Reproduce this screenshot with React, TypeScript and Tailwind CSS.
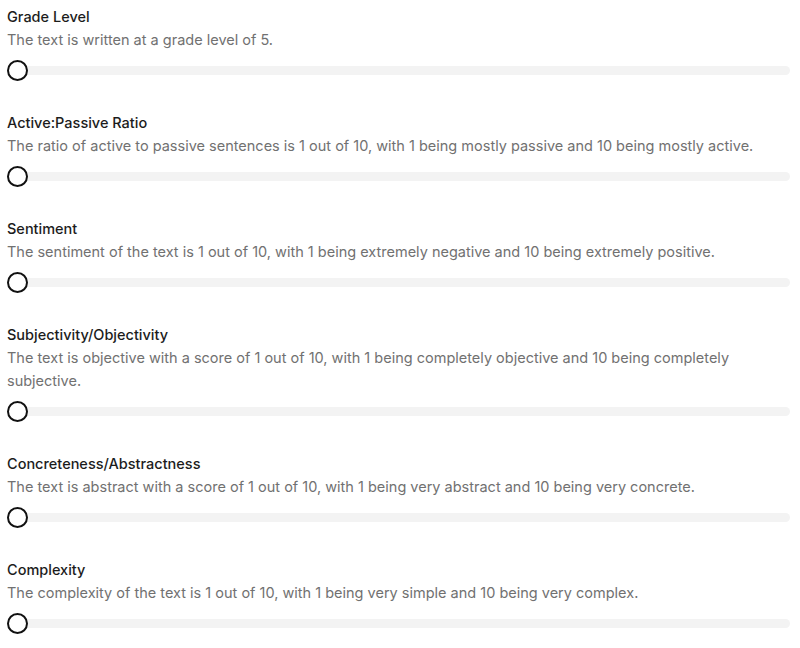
import React from "react";

const items = [
  { title: "Grade Level", desc: "The text is written at a grade level of 5." },
  { title: "Active:Passive Ratio", desc: "The ratio of active to passive sentences is 1 out of 10, with 1 being mostly passive and 10 being mostly active." },
  { title: "Sentiment", desc: "The sentiment of the text is 1 out of 10, with 1 being extremely negative and 10 being extremely positive." },
  { title: "Subjectivity/Objectivity", desc: "The text is objective with a score of 1 out of 10, with 1 being completely objective and 10 being completely subjective." },
  { title: "Concreteness/Abstractness", desc: "The text is abstract with a score of 1 out of 10, with 1 being very abstract and 10 being very concrete." },
  { title: "Complexity", desc: "The complexity of the text is 1 out of 10, with 1 being very simple and 10 being very complex." },
];

export default function App() {
  return (
    <div className="w-[800px] h-[648px] bg-white overflow-hidden pl-[7px] pr-[10px] pt-[6px] flex flex-col gap-[31px]" style={{ fontFamily: "Inter, 'Noto Sans', sans-serif" }}>
      {items.map((it) => (
        <div key={it.title} className="flex flex-col">
          <div className="text-[14.5px] leading-[22px] text-[#1c1c1c] font-medium">{it.title}</div>
          <div className="text-[14.5px] leading-[23px] text-[#717171] max-w-[760px]">{it.desc}</div>
          <div className="relative mt-[9px] h-[21px] flex items-center">
            <div className="absolute left-0 right-0 h-[9px] rounded-full bg-[#f3f3f3]" />
            <div className="relative w-[21px] h-[21px] rounded-full border-[2.5px] border-[#111] bg-white" />
          </div>
        </div>
      ))}
    </div>
  );
}
